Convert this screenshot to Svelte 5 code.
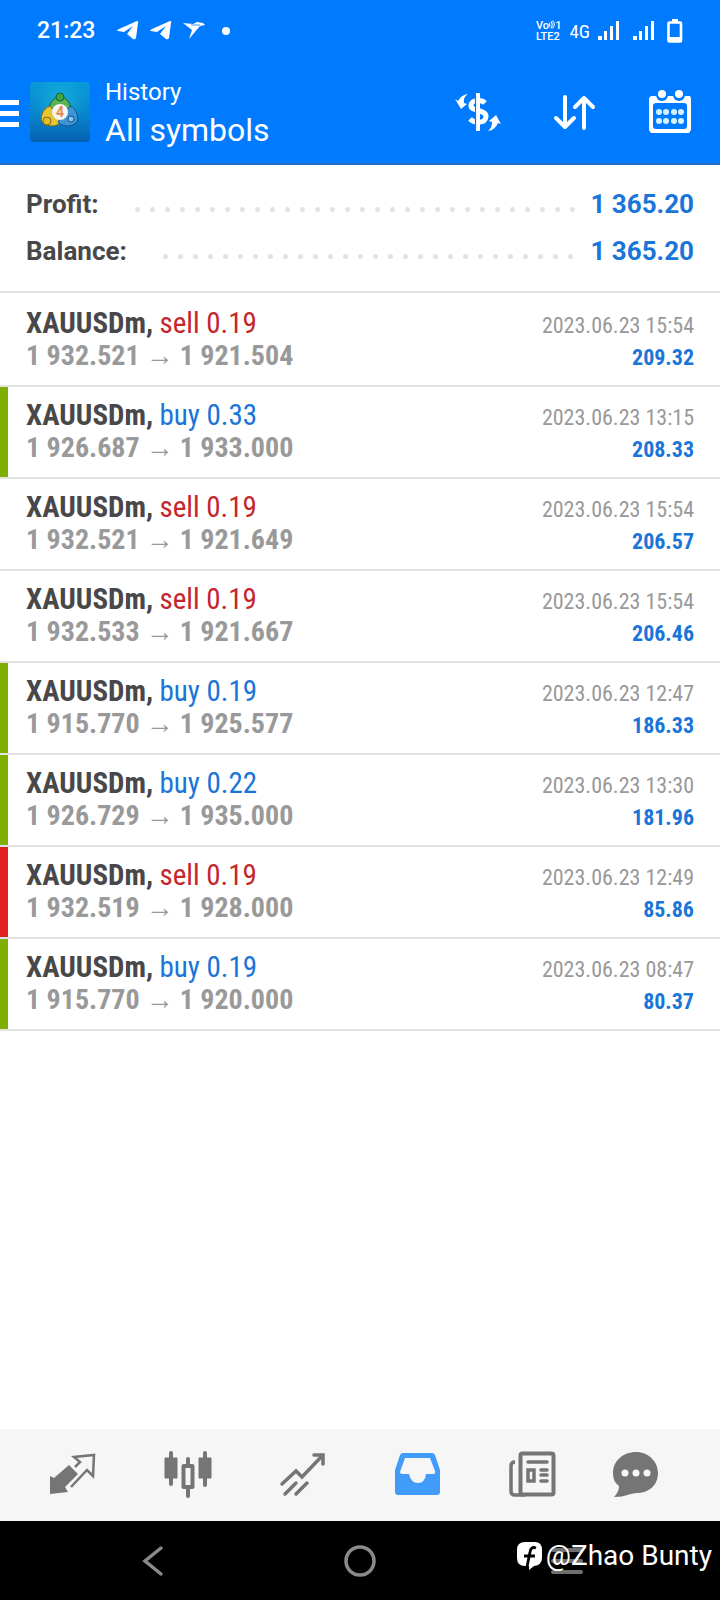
<script>
    const summary = [
        { label: "Profit:", value: "1 365.20" },
        { label: "Balance:", value: "1 365.20" },
    ];

    // mark: colour of the strip on the left (tp = take profit, sl = stop loss)
    const deals = [
        { side: "sell", lots: "0.19", from: "1 932.521", to: "1 921.504", time: "2023.06.23 15:54", profit: "209.32", mark: "" },
        { side: "buy", lots: "0.33", from: "1 926.687", to: "1 933.000", time: "2023.06.23 13:15", profit: "208.33", mark: "tp" },
        { side: "sell", lots: "0.19", from: "1 932.521", to: "1 921.649", time: "2023.06.23 15:54", profit: "206.57", mark: "" },
        { side: "sell", lots: "0.19", from: "1 932.533", to: "1 921.667", time: "2023.06.23 15:54", profit: "206.46", mark: "" },
        { side: "buy", lots: "0.19", from: "1 915.770", to: "1 925.577", time: "2023.06.23 12:47", profit: "186.33", mark: "tp" },
        { side: "buy", lots: "0.22", from: "1 926.729", to: "1 935.000", time: "2023.06.23 13:30", profit: "181.96", mark: "tp" },
        { side: "sell", lots: "0.19", from: "1 932.519", to: "1 928.000", time: "2023.06.23 12:49", profit: "85.86", mark: "sl" },
        { side: "buy", lots: "0.19", from: "1 915.770", to: "1 920.000", time: "2023.06.23 08:47", profit: "80.37", mark: "tp" },
    ];

    const tabs = ["Quotes", "Charts", "Trade", "History", "News", "Messages"];
    let current = "History";
</script>

<div class="page">
    <div class="status">
        <span class="clock">21:23</span>
        <div class="notes">
            <svg width="22" height="20" viewBox="0 0 22 20"><path d="M0 10 Q0 9 2 8 L20 0 Q22 0 21 2 L19 17 Q18 19 16 18 L10 13 L16 5 L7 11 L1 10 Z" fill="#fff" /></svg>
            <svg width="22" height="20" viewBox="0 0 22 20"><path d="M0 10 Q0 9 2 8 L20 0 Q22 0 21 2 L19 17 Q18 19 16 18 L10 13 L16 5 L7 11 L1 10 Z" fill="#fff" /></svg>
            <svg width="22" height="20" viewBox="0 0 22 20"><path d="M0 2 L10 3 L14 1 L20 2 L22 4 L17 5 L6 18 L9 9 Z" fill="#fff" /><path d="M8 4 L17 4" stroke="#007aff" stroke-width="0.8" /></svg>
            <svg class="dot" width="10" height="20" viewBox="0 0 10 20"><circle cx="5" cy="10" r="4" fill="#fff" /></svg>
        </div>
        <div class="radio">
            <div class="volte"><span>Vo<svg width="6" height="9" viewBox="0 0 7 9"><path d="M0 3 Q2 4.500 0 7 M2 1 Q5.500 4 2 9 M4 0 Q8.500 4 4 9" fill="none" stroke="#fff" stroke-width="1.200" /></svg>1</span><span>LTE2</span></div>
            <span class="net">4G</span>
            <svg width="22" height="20" viewBox="0 0 22 20"><path d="M0 15h4v4H0z M6 10h3v9H6z M12 5h3v14h-3z M18 0h3v19h-3z" fill="#fff" /></svg>
            <svg class="sim2" width="22" height="20" viewBox="0 0 22 20"><path d="M0 15h4v4H0z M6 10h3v9H6z M12 5h3v14h-3z M18 0h3v19h-3z" fill="#fff" /></svg>
            <svg width="16" height="24" viewBox="0 0 16 24"><path d="M5 0h6v3H5z" fill="#fff" /><rect x="1.500" y="3.500" width="12.500" height="19" rx="1" fill="none" stroke="#fff" stroke-width="2.600" /><path d="M1 18h14v5H1z" fill="#fff" /></svg>
        </div>
    </div>

    <header>
        <button class="menu" aria-label="Menu">
            <svg width="19" height="28" viewBox="0 0 19 28"><path d="M0 1h19v5H0z M0 12h19v5H0z M0 23h19v5H0z" fill="#fff" /></svg>
        </button>
        <svg class="logo" width="60" height="60" viewBox="0 0 60 60">
            <defs>
                <linearGradient id="sky" x1="0" y1="0" x2="0" y2="1">
                    <stop offset="0" stop-color="#0a9bd8" />
                    <stop offset="0.550" stop-color="#0784cb" />
                    <stop offset="1" stop-color="#0560b0" />
                </linearGradient>
                <radialGradient id="glow">
                    <stop offset="0" stop-color="#1fc3e0" stop-opacity="0.600" />
                    <stop offset="1" stop-color="#1fc3e0" stop-opacity="0" />
                </radialGradient>
            </defs>
            <rect width="60" height="60" rx="4" fill="url(#sky)" />
            <circle cx="30" cy="20" r="26" fill="url(#glow)" />
            <path d="M0 12H60 M0 24H60 M0 36H60 M0 48H60" stroke="#2aa5dc" stroke-opacity="0.200" />
            <path d="M30 15 C39 15 43 26 40 33 L20 33 C17 26 21 15 30 15" fill="#58b455" stroke="#1d5c3c" />
            <path d="M20 24 C12 26 9 38 13 41 C20 46 28 44 31 40 L26 32 Z" fill="#e3c630" stroke="#7b6a1f" />
            <path d="M40 24 C47 26 50 38 46 41 C40 46 31 44 28 40 L34 32 Z" fill="#3f94d4" stroke="#15508c" />
            <circle cx="30" cy="15" r="4" fill="#3fa73f" stroke="#1d5c3c" />
            <circle cx="17" cy="39" r="4" fill="#e8bc24" stroke="#7b6a1f" />
            <circle cx="41" cy="37" r="3" fill="#85c9f2" stroke="#15508c" />
            <circle cx="30" cy="30" r="8" fill="#f6f4f0" />
            <text x="30" y="35" text-anchor="middle" class="four">4</text>
        </svg>
        <div class="title">
            <h1>History</h1>
            <p>All symbols</p>
        </div>
        <button aria-label="Symbol filter">
            <svg width="48" height="48" viewBox="0 0 48 48">
                <path d="M30 15 C27 12 17 11 16 17 C15 24 32 21 31 29 C30 36 19 35 15 31" fill="none" stroke="#fff" stroke-width="5" />
                <path d="M23 5V43" stroke="#fff" stroke-width="4" />
                <path d="M20.500 8V41" stroke="#007aff" stroke-width="1.200" />
                <path d="M0 11 L3 13 Q6 7 13 6 Q8 9 9 15 L12 16 L6 21 Z" fill="#fff" />
                <path d="M46 36 L43 35 Q40 42 33 43 Q37 40 37 34 L34 33 L41 27 Z" fill="#fff" />
            </svg>
        </button>
        <button aria-label="Sort">
            <svg width="48" height="48" viewBox="0 0 48 48"><path d="M14 9V39 M5 30L14 39L23 30 M33 40V10 M24 19L33 10L42 19" fill="none" stroke="#fff" stroke-width="4" stroke-linecap="round" stroke-linejoin="round" /></svg>
        </button>
        <button aria-label="Period">
            <svg width="48" height="48" viewBox="0 0 48 48">
                <path d="M4 8H43L44 10V42L42 45H4L2 42V10Z" fill="#fff" />
                <rect x="6" y="15" width="34" height="26" rx="3" fill="#007aff" />
                <circle cx="15" cy="7" r="6" fill="#007aff" /><circle cx="32" cy="7" r="6" fill="#007aff" />
                <circle cx="15" cy="6" r="4" fill="#fff" /><circle cx="32" cy="6" r="4" fill="#fff" />
                <g fill="#d5f3ff"><circle cx="12" cy="24" r="3" /><circle cx="19" cy="24" r="3" /><circle cx="27" cy="24" r="3" /><circle cx="34" cy="24" r="3" /><circle cx="12" cy="33" r="3" /><circle cx="19" cy="33" r="3" /><circle cx="27" cy="33" r="3" /><circle cx="34" cy="33" r="3" /></g>
            </svg>
        </button>
    </header>

    <main>
        <dl>
            {#each summary as row}
                <div class="sum">
                    <dt>{row.label}</dt>
                    <dd>{row.value}</dd>
                </div>
            {/each}
        </dl>
        <ul>
            {#each deals as deal}
                <li class={deal.mark}>
                    <span><b>XAUUSDm,</b> <span class={deal.side}>{deal.side} {deal.lots}</span></span>
                    <time>{deal.time}</time>
                    <span class="prices">{deal.from}<span class="arrow">→</span>{deal.to}</span>
                    <span class="profit">{deal.profit}</span>
                </li>
            {/each}
        </ul>
    </main>

    <nav class="tabs">
        {#each tabs as tab}
            <button aria-label={tab} class:active={tab === current} on:click={() => (current = tab)}>
                <svg width="48" height="48" viewBox="0 0 48 48">
                    {#if tab === "Quotes"}
                        <path d="M1 25 L5 27 L20 14 L29 23 L16 36 L19 41 L1 43 Z" fill="currentColor" />
                        <path d="M26 16 L31 11 L25 6 L45 4 L44 25 L38 19 L22 36" fill="none" stroke="currentColor" stroke-width="2.500" />
                    {:else if tab === "Charts"}
                        <path d="M7 2V33 M41 2V34 M24 8V14 M24 37V45" stroke="currentColor" stroke-width="4" stroke-linecap="round" />
                        <path d="M1 7h12v20H1z M35 7h12v20H35z" fill="currentColor" stroke="currentColor" stroke-linejoin="round" />
                        <rect x="19.500" y="15" width="9" height="21" fill="none" stroke="currentColor" stroke-width="4" stroke-linejoin="round" />
                    {:else if tab === "Trade"}
                        <path d="M3 33 L17 20 L23 26 L43 5 M35 4 H44 V13 M6 43 L17 32 M17 43 L28 32" fill="none" stroke="currentColor" stroke-width="3.500" stroke-linecap="round" />
                    {:else if tab === "History"}
                        <path d="M9 2 H38 Q40 2 41 4 L46 19 V41 Q46 44 43 44 H4 Q1 44 1 41 V19 L6 4 Q7 2 9 2 M11 7 L6 21 Q6 23 8 23 H15 Q17 32 24 32 Q31 32 32 23 H39 Q42 23 41 20 L36 7 Z" fill="currentColor" fill-rule="evenodd" />
                    {:else if tab === "News"}
                        <rect x="11.500" y="2.500" width="33" height="41" rx="2" fill="none" stroke="currentColor" stroke-width="4" />
                        <path d="M6 11 Q2 11 2 15 V40 Q2 44 6 44 H16" fill="none" stroke="currentColor" stroke-width="3.500" />
                        <path d="M19 11H38 M32 19H38 M32 24H38 M32 30H38" stroke="currentColor" stroke-width="3.500" stroke-linecap="round" />
                        <rect x="19" y="19" width="6" height="11" fill="none" stroke="currentColor" stroke-width="3.500" />
                    {:else}
                        <path d="M24 1 C37 1 46 11 46 22 C46 35 36 42 25 42 C18 42 14 46 2 46 C6 42 7 38 7 35 C3 32 1 28 1 22 C1 10 11 1 24 1" fill="currentColor" />
                        <circle cx="13" cy="22" r="3.500" fill="#f6f6f6" /><circle cx="24" cy="22" r="3.500" fill="#f6f6f6" /><circle cx="35" cy="22" r="3.500" fill="#f6f6f6" />
                    {/if}
                </svg>
            </button>
        {/each}
    </nav>

    <div class="system">
        <button aria-label="Back"><svg width="32" height="32" viewBox="0 0 32 32"><path d="M24 3 L8 16 L24 29" fill="none" stroke="#8a8a8a" stroke-width="3.500" stroke-linecap="round" /></svg></button>
        <button aria-label="Home"><svg width="32" height="32" viewBox="0 0 32 32"><circle cx="16" cy="16" r="14" fill="none" stroke="#8a8a8a" stroke-width="3.500" /></svg></button>
        <button aria-label="Recent apps"><svg width="32" height="32" viewBox="0 0 32 32"><path d="M2 5H30 M2 16H30 M2 27H30" stroke="#6f6f6f" stroke-width="4" stroke-linecap="round" /></svg></button>
        <div class="credit">
            <svg width="26" height="28" viewBox="0 0 26 28"><path d="M8 0 H18 Q25 0 25 8 V16 Q25 23 17 24 L12 28 V24 H8 Q0 24 0 16 V8 Q0 0 8 0" fill="#fff" /><path d="M19 6 Q14 4 13 10 L10 25 M7 14 H18" fill="none" stroke="#000" stroke-width="2.800" /></svg>
            <span>@Zhao Bunty</span>
        </div>
    </div>
</div>

<style>
    :global(body) {
        margin: 0;
        background: #fff;
    }

    .page {
        display: flex;
        flex-direction: column;
        min-height: 100vh;
        font-family: Roboto, sans-serif;
        color: #48484a;
    }

    svg {
        display: block;
        flex: none;
    }

    button {
        display: block;
        padding: 0;
        border: 0;
        background: none;
        color: inherit;
    }

    .status {
        display: flex;
        align-items: center;
        box-sizing: border-box;
        height: 60px;
        padding: 2px 37px 0;
        background: #007aff;
        color: #fff;
    }

    .clock {
        font-size: 23px;
        font-weight: 500;
        line-height: 28px;
    }

    .notes {
        display: flex;
        gap: 11px;
        margin-left: 22px;
    }

    .dot {
        margin-left: 5px;
    }

    .radio {
        display: flex;
        align-items: center;
        gap: 8px;
        margin-left: auto;
    }

    .sim2 {
        margin: 0 4px 0 5px;
    }

    .volte {
        display: flex;
        flex-direction: column;
        font-size: 11px;
        font-weight: 500;
        line-height: 11px;
    }

    .volte span {
        display: flex;
    }

    .net {
        font-family: "Roboto Condensed", Roboto, sans-serif;
        font-size: 19px;
    }

    header {
        display: flex;
        align-items: center;
        box-sizing: border-box;
        height: 105px;
        padding-right: 25px;
        border-bottom: 2px solid #1f70c4;
        background: #007aff;
        color: #fff;
    }

    .menu {
        padding-top: 2px;
    }

    .logo {
        margin: 0 15px 0 11px;
    }

    .four {
        font-size: 14px;
        font-weight: 700;
        fill: #e58a4e;
    }

    .title {
        flex: 1;
    }

    h1,
    p {
        margin: 0;
        font-size: 24px;
        font-weight: 400;
        line-height: 36px;
    }

    p {
        font-size: 32px;
        line-height: 40px;
    }

    header button + button {
        margin-left: 48px;
    }

    main {
        flex: 1;
    }

    dl {
        margin: 0;
        padding: 16px 26px 16px;
        border-bottom: 2px solid #e2e2e2;
        font-size: 26px;
        font-weight: 700;
        line-height: 47px;
    }

    .sum {
        display: flex;
    }

    dt {
        flex: 1;
        display: flex;
    }

    dt::after {
        content: "";
        flex: 1;
        margin: 21px 12px 0 31px;
        height: 15px;
        background: radial-gradient(circle, #e2e2e2 2px, transparent 3px) 0 0 / 15px 15px repeat-x;
    }

    dd {
        margin: 0;
        color: #1a75d8;
    }

    ul {
        margin: 0;
        padding: 2px 0 0;
        list-style: none;
    }

    li {
        --mark: transparent;
        display: grid;
        grid-template-columns: 1fr auto;
        grid-template-rows: 32px 32px;
        align-items: baseline;
        padding: 13px 26px;
        border-bottom: 2px solid #e2e2e2;
        background: linear-gradient(var(--mark), var(--mark)) 0 0 / 8px 100% no-repeat padding-box;
        font-family: "Roboto Condensed", Roboto, sans-serif;
        font-size: 28px;
        line-height: 32px;
    }

    .tp {
        --mark: #7fb000;
    }

    .sl {
        --mark: #e02020;
    }

    time,
    .profit {
        font-size: 22px;
        text-align: right;
    }

    time,
    .prices {
        color: #999;
    }

    .prices,
    .profit {
        font-weight: 700;
    }

    .profit,
    .buy {
        color: #1a75d8;
    }

    .sell {
        color: #c4262e;
    }

    b,
    .sell,
    .buy {
        font-size: 29px;
        line-height: 0;
    }

    .arrow {
        margin: 0 6px;
        font-family: "Liberation Sans", sans-serif;
        font-weight: 400;
        line-height: 0;
    }

    .tabs {
        display: grid;
        grid-template-columns: repeat(5, 115fr) 92fr;
        align-items: center;
        height: 92px;
        padding: 0 38px 0 15px;
        background: #f6f6f6;
        color: #757575;
    }

    .tabs svg,
    .system svg {
        margin: 0 auto;
    }

    .tabs .active {
        color: #419bf9;
    }

    .system {
        position: relative;
        display: grid;
        grid-template-columns: repeat(3, 1fr);
        align-items: center;
        height: 79px;
        padding: 0 49px;
        background: #000;
    }

    /* watermark lies over the recent apps button */
    .credit {
        position: absolute;
        right: 8px;
        bottom: 28px;
        display: flex;
        align-items: center;
        gap: 3px;
        color: #fff;
        font-size: 28px;
        line-height: 32px;
    }

    .system .credit svg {
        margin: 0;
    }
</style>
